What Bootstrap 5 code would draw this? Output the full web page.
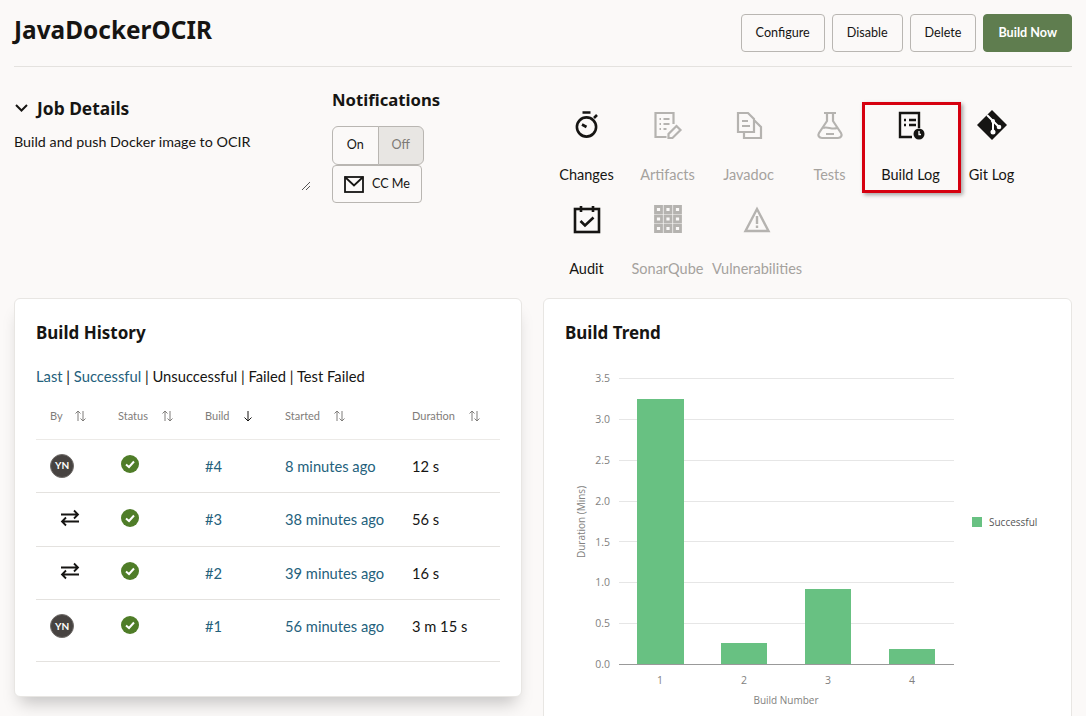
<!doctype html>
<html lang="en">
<head>
  <meta charset="utf-8">
  <meta name="viewport" content="width=device-width, initial-scale=1">
  <title>JavaDockerOCIR</title>
  <link href="https://cdn.jsdelivr.net/npm/bootstrap@5.3.5/dist/css/bootstrap.min.css" rel="stylesheet">
  <style>
    html, body { height: 716px; overflow: hidden; }
    body { background: #fbf9f8; color: #161513; font-family: "Lato", "Noto Sans", sans-serif; font-size: 14.3px; }
    a { color: #24617c; text-decoration: none; }
    .page-wrap { padding: 14px 14px 0; }
    .page-head { height: 53px; border-bottom: 1px solid #e4e2df; }
    .page-title { font-family: "Noto Sans", sans-serif; font-size: 24.4px; font-weight: 700; line-height: 32px; margin: 0; }
    .act-btn { height: 38px; padding: 0 14px; font-size: 12.6px; color: #161513; background: #fbf9f8; border: 1px solid #b9b6b2; border-radius: 4px; }
    .act-btn.go { background: #5f7d4f; border-color: #5f7d4f; color: #fff; font-weight: 700; }
    .btn-row { gap: 7px; }
    .top-area { height: 231px; }
    .job-col { width: 318px; position: relative; padding-top: 29px; }
    .job-head { font-family: "Noto Sans", sans-serif; font-size: 17.4px; font-weight: 700; line-height: 24px; }
    .job-desc { margin-top: 12px; line-height: 20px; }
    .grip { position: absolute; left: 287px; top: 114px; }
    .notif-col { width: 214px; padding-top: 21px; }
    .notif-head { font-family: "Noto Sans", sans-serif; font-size: 16.7px; font-weight: 700; line-height: 24px; margin-bottom: 14px; }
    .tog { height: 39px; width: 46px; padding: 0; font-size: 12.6px; color: #161513; background: #fbf9f8; border: 1px solid #b9b6b2; }
    .tog.off { background: #e8e6e3; color: #7d7a76; }
    .cc-btn { width: 90px; height: 38px; padding: 0; font-size: 12.6px; color: #161513; background: #fbf9f8; border: 1px solid #b9b6b2; border-radius: 4px; }
    .tiles { width: 526px; padding-top: 41px; }
    .tile { min-width: 81px; height: 94px; padding: 0 4px; text-align: center; color: #161513; position: relative; }
    .tile.dim { color: #a5a29e; }
    .tile svg { display: block; margin: 0 auto; }
    .tile-ic { height: 44px; padding-top: 1px; }
    .tile-lb { margin-top: 13px; line-height: 20px; font-size: 14.5px; white-space: nowrap; }
    .red-box { position: absolute; left: -8px; right: -10px; top: -6px; height: 91px; border: 3px solid #d6000f; box-shadow: 2px 2px 4px rgba(0,0,0,.35); }
    .panel { background: #fff; border: 1px solid #e8e6e3; border-radius: 6px; }
    .hist { width: 508px; height: 399px; padding: 21px; box-shadow: 0 12px 16px -6px rgba(0,0,0,.22); }
    .trend { width: 529px; height: 440px; padding: 21px; margin-left: 21px; }
    .panel-title { font-family: "Noto Sans", sans-serif; font-size: 17px; font-weight: 700; line-height: 26px; margin: 0; }
    .filter-line { margin-top: 19px; line-height: 22px; font-size: 14.75px; }
    .hist-table { table-layout: fixed; width: 464px; margin: 10px 0 0; --bs-table-bg: transparent; }
    .hist-table th { height: 42px; padding: 0 0 4px 14px; font-size: 11px; font-weight: 400; color: #7f7d7a; vertical-align: middle; border-color: #eceae7; white-space: nowrap; }
    .hist-table td { height: 53.5px; padding: 0 0 0 14px; vertical-align: middle; font-size: 14.7px; border-color: #e4e2df; color: #161513; white-space: nowrap; }
    .hist-table tr.end td { height: 62px; padding-bottom: 9px; }
    .sort-ic { margin-left: 13px; vertical-align: -2px; }
    .sort-ic.near { margin-left: 11px; }
    .ok-ic { display: block; margin: -3px 0 0 3px; }
    .swap-ic { display: block; margin: -3px 0 0 10px; }
    .avatar { width: 24px; height: 24px; border-radius: 50%; background: #474341; border: 1px solid #706c69; color: #fff; font-size: 10px; font-weight: 700; display: flex; align-items: center; justify-content: center; }
    .trend-svg { display: block; margin: 20px 0 0 -21px; }
    .trend-svg text { font-family: "Open Sans", sans-serif; fill: #828180; font-size: 10.5px; }
  </style>
</head>
<body>
  <div class="page-wrap">
    <!-- Title and actions -->
    <div class="page-head d-flex justify-content-between align-items-start">
      <h1 class="page-title">JavaDockerOCIR</h1>
      <div class="d-flex btn-row">
        <button class="btn act-btn" type="button">Configure</button>
        <button class="btn act-btn" type="button">Disable</button>
        <button class="btn act-btn" type="button">Delete</button>
        <button class="btn act-btn go" type="button">Build Now</button>
      </div>
    </div>

    <div class="top-area d-flex">
      <!-- Job details -->
      <div class="job-col">
        <div class="job-head d-flex align-items-center gap-2">
          <svg width="15" height="10" viewBox="0 0 15 10" fill="none" stroke="#161513" stroke-width="2"><path d="M2 2l5.5 5.5L13 2"/></svg>
          <span>Job Details</span>
        </div>
        <div class="job-desc">Build and push Docker image to OCIR</div>
        <svg class="grip" width="10" height="10" viewBox="0 0 10 10" stroke="#555" stroke-width="1"><path d="M1 9l8-8M5 9l4-4"/></svg>
      </div>

      <!-- Notifications -->
      <div class="notif-col">
        <div class="notif-head">Notifications</div>
        <div class="btn-group d-flex" style="width:92px">
          <button class="btn tog" type="button">On</button>
          <button class="btn tog off" type="button">Off</button>
        </div>
        <button class="btn cc-btn d-flex align-items-center justify-content-center gap-2" type="button">
          <svg width="20" height="17" viewBox="0 0 20 17" fill="none" stroke="#161513" stroke-width="1.8"><rect x="1" y="1" width="18" height="15"/><path d="M1 1l9 8.500L19 1"/></svg>
          <span>CC Me</span>
        </button>
      </div>

      <!-- Job links -->
      <div class="tiles d-flex flex-wrap align-content-start">
        <div class="tile">
          <div class="tile-ic">
            <svg width="32" height="32" viewBox="0 0 32 32" fill="none" stroke="#161513" stroke-width="2.6"><circle cx="15.5" cy="18" r="9.6"/><path d="M11.5 3.5h8M15.5 18l-4.5-2.5M23 9l3-3"/></svg>
          </div>
          <div class="tile-lb">Changes</div>
        </div>
        <div class="tile dim">
          <div class="tile-ic">
            <svg width="32" height="32" viewBox="1.500 0 32 32" fill="none" stroke="#b5b3b0" stroke-width="2.2"><path d="M23 15V4H5v24h11"/><path d="M9 10h1.5M13 10h6M9 15h1.5M13 15h6M9 20h1.5M13 20h3"/><path d="M18 29v-4l8-8 4 4-8 8z"/></svg>
          </div>
          <div class="tile-lb">Artifacts</div>
        </div>
        <div class="tile dim">
          <div class="tile-ic">
            <svg width="32" height="32" viewBox="0 0 32 32" fill="none" stroke="#b5b3b0" stroke-width="2.2"><path d="M5 4h10l6 6v13H5z"/><path d="M21 12h1l6 6v11H11v-6"/><path d="M9 12h6M9 17h8"/></svg>
          </div>
          <div class="tile-lb">Javadoc</div>
        </div>
        <div class="tile dim">
          <div class="tile-ic">
            <svg width="32" height="32" viewBox="0 0 32 32" fill="none" stroke="#b5b3b0" stroke-width="2.2"><path d="M10 4h12M13 4v8L5 24c-1.500 2.500 0 5 3 5h16c3 0 4.500-2.500 3-5l-8-12V4"/><path d="M9 19c4-2 9 2 14 0M12 25h8"/></svg>
          </div>
          <div class="tile-lb">Tests</div>
        </div>
        <div class="tile">
          <div class="tile-ic">
            <svg width="32" height="32" viewBox="0 0 32 32" fill="none" stroke="#161513" stroke-width="2.4"><path d="M17 28H5V4h19v15"/><path d="M9 11h2M14 11h7M9 16h2M14 16h7"/><circle cx="24" cy="25" r="5.500" fill="#161513" stroke="none"/><path d="M24 22v3.500h2" stroke="#fff" stroke-width="1.300"/></svg>
          </div>
          <div class="tile-lb">Build Log</div>
          <div class="red-box"></div>
        </div>
        <div class="tile">
          <div class="tile-ic">
            <svg width="32" height="32" viewBox="0 0 32 32"><path d="M16 1L31 16 16 31 1 16z" fill="#161513"/><path d="M11 6l6 6v11M17 12l6 6" stroke="#fff" stroke-width="2" fill="none"/><circle cx="17" cy="23" r="2.500" fill="#fff"/><circle cx="17" cy="12" r="2" fill="#fff"/><circle cx="23" cy="18" r="2.300" fill="#fff"/></svg>
          </div>
          <div class="tile-lb">Git Log</div>
        </div>
        <div class="tile">
          <div class="tile-ic">
            <svg width="32" height="32" viewBox="0 0 32 32" fill="none" stroke="#161513" stroke-width="2.6"><rect x="4" y="6" width="24" height="23"/><path d="M10 3v6M22 3v6"/><path d="M9.500 18l4.500 4.500 8.500-8"/></svg>
          </div>
          <div class="tile-lb">Audit</div>
        </div>
        <div class="tile dim">
          <div class="tile-ic">
            <svg width="32" height="32" viewBox="0 0 32 32" fill="none" stroke="#b5b3b0" stroke-width="2.800"><path d="M3.500 3.500h6v6h-6zM13 3.500h6v6h-6zM22.500 3.500h6v6h-6zM3.500 13h6v6h-6zM13 13h6v6h-6zM22.500 13h6v6h-6zM3.500 22.500h6v6h-6zM13 22.500h6v6h-6zM22.500 22.500h6v6h-6z"/></svg>
          </div>
          <div class="tile-lb">SonarQube</div>
        </div>
        <div class="tile dim">
          <div class="tile-ic">
            <svg width="32" height="32" viewBox="0 0 32 32" fill="none" stroke="#b5b3b0" stroke-width="2.400"><path d="M16 6L4.500 28h23z"/><path d="M16 13v8M16 22.500v2.500"/></svg>
          </div>
          <div class="tile-lb">Vulnerabilities</div>
        </div>
      </div>
    </div>

    <div class="d-flex align-items-start">
      <!-- Build history -->
      <div class="panel hist">
        <h2 class="panel-title">Build History</h2>
        <div class="filter-line"><a href="#">Last</a> | <a href="#">Successful</a> | Unsuccessful | Failed | Test Failed</div>
        <table class="table hist-table">
          <colgroup><col style="width:68px"><col style="width:87px"><col style="width:80px"><col style="width:127px"><col style="width:102px"></colgroup>
          <thead>
            <tr>
              <th>By<svg class="sort-ic near" width="13" height="12" viewBox="0 0 13 12" fill="none" stroke="#7f7d7a"><path d="M4 11V1L1.500 3.500M4 1l2.500 2.500M9 1v10l-2.500-2.500M9 11l2.500-2.500"/></svg></th>
              <th>Status<svg class="sort-ic" width="13" height="12" viewBox="0 0 13 12" fill="none" stroke="#7f7d7a"><path d="M4 11V1L1.500 3.500M4 1l2.500 2.500M9 1v10l-2.500-2.500M9 11l2.500-2.500"/></svg></th>
              <th>Build<svg class="sort-ic" width="10" height="12" viewBox="0 0 10 12" fill="none" stroke="#161513"><path d="M5 1v10L1.500 7.500M5 11l3.500-3.500"/></svg></th>
              <th>Started<svg class="sort-ic" width="13" height="12" viewBox="0 0 13 12" fill="none" stroke="#7f7d7a"><path d="M4 11V1L1.500 3.500M4 1l2.500 2.500M9 1v10l-2.500-2.500M9 11l2.500-2.500"/></svg></th>
              <th>Duration<svg class="sort-ic" width="13" height="12" viewBox="0 0 13 12" fill="none" stroke="#7f7d7a"><path d="M4 11V1L1.500 3.500M4 1l2.500 2.500M9 1v10l-2.500-2.500M9 11l2.500-2.500"/></svg></th>
            </tr>
          </thead>
          <tbody>
            <tr>
              <td><div class="avatar">YN</div></td>
              <td><svg class="ok-ic" width="18" height="18" viewBox="0 0 18 18"><circle cx="9" cy="9" r="9" fill="#4f7d28"/><path d="M5 9.500l3 2.500 5-5.500" fill="none" stroke="#fff" stroke-width="2"/></svg></td>
              <td><a href="#">#4</a></td>
              <td><a href="#">8 minutes ago</a></td>
              <td>12 s</td>
            </tr>
            <tr>
              <td><svg class="swap-ic" width="20" height="18" viewBox="0 0 20 18" fill="none" stroke="#161513" stroke-width="1.800"><path d="M1 5.500h17M14 1.500l4 4-4 4M19 12.500H2M6 8.500l-4 4 4 4"/></svg></td>
              <td><svg class="ok-ic" width="18" height="18" viewBox="0 0 18 18"><circle cx="9" cy="9" r="9" fill="#4f7d28"/><path d="M5 9.500l3 2.500 5-5.500" fill="none" stroke="#fff" stroke-width="2"/></svg></td>
              <td><a href="#">#3</a></td>
              <td><a href="#">38 minutes ago</a></td>
              <td>56 s</td>
            </tr>
            <tr>
              <td><svg class="swap-ic" width="20" height="18" viewBox="0 0 20 18" fill="none" stroke="#161513" stroke-width="1.800"><path d="M1 5.500h17M14 1.500l4 4-4 4M19 12.500H2M6 8.500l-4 4 4 4"/></svg></td>
              <td><svg class="ok-ic" width="18" height="18" viewBox="0 0 18 18"><circle cx="9" cy="9" r="9" fill="#4f7d28"/><path d="M5 9.500l3 2.500 5-5.500" fill="none" stroke="#fff" stroke-width="2"/></svg></td>
              <td><a href="#">#2</a></td>
              <td><a href="#">39 minutes ago</a></td>
              <td>16 s</td>
            </tr>
            <tr class="end">
              <td><div class="avatar">YN</div></td>
              <td><svg class="ok-ic" width="18" height="18" viewBox="0 0 18 18"><circle cx="9" cy="9" r="9" fill="#4f7d28"/><path d="M5 9.500l3 2.500 5-5.500" fill="none" stroke="#fff" stroke-width="2"/></svg></td>
              <td><a href="#">#1</a></td>
              <td><a href="#">56 minutes ago</a></td>
              <td>3 m 15 s</td>
            </tr>
          </tbody>
        </table>
      </div>

      <!-- Build trend -->
      <div class="panel trend">
        <h2 class="panel-title">Build Trend</h2>
        <svg class="trend-svg" width="527" height="360" viewBox="544 366 527 360">
          <g stroke="#e6e6e6">
            <path d="M619 378.500h335M619 419.500h335M619 460.500h335M619 501.500h335M619 541.500h335M619 582.500h335M619 623.500h335"/>
          </g>
          <g fill="#68c182">
            <rect x="637" y="399" width="47" height="265"/>
            <rect x="721" y="643" width="46" height="21"/>
            <rect x="805" y="589" width="46" height="75"/>
            <rect x="889" y="649" width="46" height="15"/>
          </g>
          <path d="M619 664.500h335" stroke="#999"/>
          <g text-anchor="end">
            <text x="610" y="382">3.5</text>
            <text x="610" y="423">3.0</text>
            <text x="610" y="464">2.5</text>
            <text x="610" y="505">2.0</text>
            <text x="610" y="546">1.5</text>
            <text x="610" y="586">1.0</text>
            <text x="610" y="627">0.5</text>
            <text x="610" y="668">0.0</text>
          </g>
          <g text-anchor="middle">
            <text x="660" y="684">1</text>
            <text x="744" y="684">2</text>
            <text x="828" y="684">3</text>
            <text x="912" y="684">4</text>
            <text x="786" y="704" style="font-size:10px">Build Number</text>
            <text x="0" y="0" style="font-size:10px" transform="translate(585 522) rotate(-90)">Duration (Mins)</text>
          </g>
          <rect x="972" y="517" width="10" height="10" fill="#68c182"/>
          <text x="989" y="526" style="font-size:10px;fill:#555">Successful</text>
        </svg>
      </div>
    </div>
  </div>

  <script src="https://cdn.jsdelivr.net/npm/bootstrap@5.3.5/dist/js/bootstrap.bundle.min.js"></script>
</body>
</html>
